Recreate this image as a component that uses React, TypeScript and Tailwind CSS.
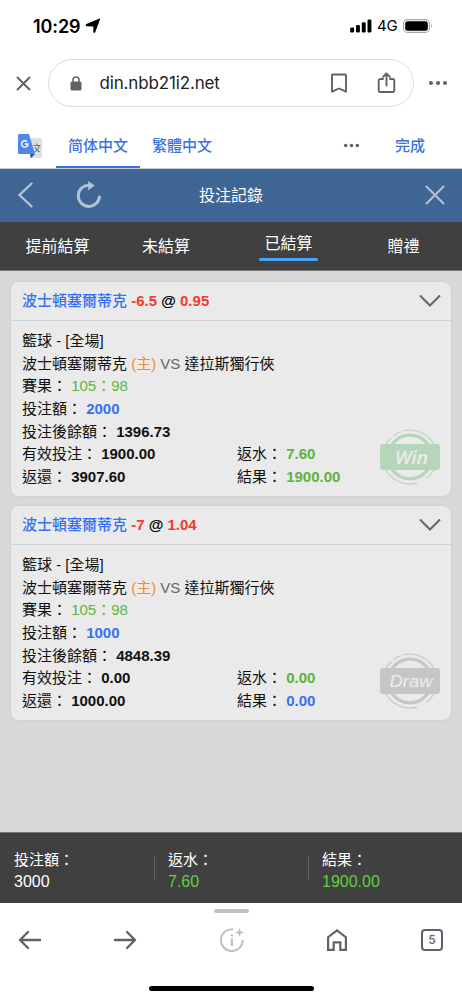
import type { ReactNode } from "react";

interface Bet {
  team: string;
  handicap: string;
  odds: string;
  score: string;
  stake: string;
  balance: string;
  valid: string;
  returned: string;
  rebate: string;
  result: string;
  outcome: "Win" | "Draw";
}

const bets: Bet[] = [
  {
    team: "波士頓塞爾蒂克",
    handicap: "-6.5",
    odds: "0.95",
    score: "105：98",
    stake: "2000",
    balance: "1396.73",
    valid: "1900.00",
    returned: "3907.60",
    rebate: "7.60",
    result: "1900.00",
    outcome: "Win",
  },
  {
    team: "波士頓塞爾蒂克",
    handicap: "-7",
    odds: "1.04",
    score: "105：98",
    stake: "1000",
    balance: "4848.39",
    valid: "0.00",
    returned: "1000.00",
    rebate: "0.00",
    result: "0.00",
    outcome: "Draw",
  },
];

const totals = [
  { label: "投注額：", value: "3000", color: "text-white" },
  { label: "返水：", value: "7.60", color: "text-[#62cf3f]" },
  { label: "結果：", value: "1900.00", color: "text-[#62cf3f]" },
];

function StatusBar() {
  return (
    <div className="flex h-[52px] items-center justify-between pr-[29px] pl-[33px] font-['Inter',sans-serif] text-black">
      <div className="flex items-center gap-[5px]">
        <span className="text-[18px] font-semibold tracking-[-0.1px]">10:29</span>
        <svg width="16" height="16" viewBox="0 0 16 16">
          <path d="M15 1.600 10.200 14.200c-.4.900-1.900.700-1.900-.3V8.500L2 8.300C.5 8.200.3 6.600 1.500 6.100L14 .7c.7-.3 1.200.2 1 .9z" />
        </svg>
      </div>
      <div className="flex items-center">
        <svg width="22" height="14" viewBox="0 0 22 14">
          <rect x="0.200" y="8.500" width="3.900" height="5" rx="1.200" />
          <rect x="6" y="6" width="3.900" height="7.500" rx="1.200" />
          <rect x="11.800" y="3.300" width="3.900" height="10.200" rx="1.200" />
          <rect x="17.500" y="0.500" width="3.900" height="13" rx="1.200" />
        </svg>
        <span className="ml-[5px] w-[26px] text-[15px] tracking-[-0.3px]">4G</span>
        <svg width="30" height="14" viewBox="0 0 30 14">
          <rect x="0.600" y="0.600" width="25.800" height="12.800" rx="4" fill="none" stroke="#a5a5a5" strokeWidth="1.100" />
          <rect x="2.200" y="2.200" width="22.600" height="9.600" rx="2.500" />
          <path d="M28 5v4c1.300-.6 1.300-3.400 0-4z" fill="#a5a5a5" />
        </svg>
      </div>
    </div>
  );
}

function AddressBar() {
  return (
    <div className="flex h-[62px] items-center pl-[16px]">
      <svg width="15" height="15" viewBox="0 0 15 15" fill="none" stroke="#5f6368" strokeWidth="2" strokeLinecap="round">
        <path d="m1.500 1.500 12 12M13.500 1.500l-12 12" />
      </svg>
      <div className="ml-[17px] flex h-12 w-[366px] items-center rounded-full border border-[#dadce0] pl-[21px]">
        <svg width="12" height="15" viewBox="0 0 12 15">
          <path d="M3 6V4a3 3 0 0 1 6 0v2" fill="none" stroke="#5f6368" strokeWidth="1.500" />
          <rect x="0.500" y="5.500" width="11" height="9" rx="1.500" fill="#5f6368" />
        </svg>
        <span className="ml-[17.5px] pt-[2px] font-['Inter',sans-serif] text-[17px] tracking-[-0.15px] text-[#202124]">
          din.nbb21i2.net
        </span>
        <svg className="ml-auto" width="18" height="21" viewBox="0 0 18 21" fill="none" stroke="#5f6368" strokeWidth="1.900">
          <path d="M2 2.500Q2 1.500 3 1.500h12q1 0 1 1v16.200l-7-3.200-7 3.200z" strokeLinejoin="round" />
        </svg>
        <svg className="mr-[17px] ml-[29px]" width="19" height="22" viewBox="0 0 19 22" fill="none" stroke="#5f6368" strokeWidth="1.900" strokeLinecap="round" strokeLinejoin="round">
          <path d="M6 7H3.500Q1.700 7 1.700 8.800v9.400Q1.700 20 3.500 20h12q1.800 0 1.800-1.800V8.800Q17.300 7 15.500 7H13M9.500 13.500V1.700M6 4.900l3.500-3.400L13 4.900" />
        </svg>
      </div>
      <svg className="ml-[14px]" width="20" height="6" viewBox="0 0 20 6" fill="#5f6368">
        <circle cx="3" cy="3" r="2.100" />
        <circle cx="10" cy="3" r="2.100" />
        <circle cx="17" cy="3" r="2.100" />
      </svg>
    </div>
  );
}

function TranslateBar() {
  return (
    <div className="flex h-[54.5px] border-b border-[#c4cad1] pl-[17px] font-['Noto_Sans_CJK_SC',sans-serif] text-[15px] font-medium text-[#3b72e0]">
      <svg className="mt-[19px]" width="26" height="26" viewBox="0 0 26 26">
        <path d="M9 5h14.500q1.500 0 1.500 1.500v17q0 1.500-1.500 1.500H14z" fill="#dfe0e2" />
        <path d="m13 20 5 1-4.300 4.300z" fill="#3549a5" />
        <path d="M2.500 1H12l6 20H2.500Q1 21 1 19.500v-17Q1 1 2.500 1z" fill="#4e86ee" />
        <path d="M16.500 12.500h7M20 10.500v2M17.500 19c3-1.500 4.300-3.500 4.600-6M18 14c1 2 3 4.200 5 5" fill="none" stroke="#667984" strokeWidth="1.200" />
        <path d="M10 8.600A3.200 3.200 0 1 0 11 11H7.800" fill="none" stroke="#fff" strokeWidth="1.400" />
      </svg>
      <div className="ml-[13px] flex w-[84px] items-center justify-center border-b-2 border-[#3b72e0] pt-[10px]">简体中文</div>
      <div className="ml-[12px] flex items-center pt-[8px]">繁體中文</div>
      <svg className="mt-[29px] ml-[131px]" width="17" height="5" viewBox="0 0 17 5" fill="#5f6368">
        <circle cx="2.700" cy="2.500" r="1.800" />
        <circle cx="8.500" cy="2.500" r="1.800" />
        <circle cx="14.300" cy="2.500" r="1.800" />
      </svg>
      <div className="ml-[35px] flex items-center pt-[8px]">完成</div>
    </div>
  );
}

function Header() {
  return (
    <header className="flex h-[53.5px] items-center bg-[#3f6594] pl-[17px] text-white">
      <svg width="17" height="28" viewBox="0 0 17 28" fill="none" stroke="#b2c1d4" strokeWidth="2.400">
        <path d="M15.200 2 2.500 14l12.700 12" />
      </svg>
      <svg className="ml-[42px]" width="26" height="28" viewBox="0 0 26 28">
        <path d="M13.500 4.200A10.600 10.600 0 1 0 23.500 14.700" fill="none" stroke="#b2c1d4" strokeWidth="3" />
        <path d="M12.200 0v9.400l6.500-4.900z" fill="#b2c1d4" />
      </svg>
      <h1 className="ml-[97px] pt-[2px] text-[16px]">投注記錄</h1>
      <svg className="ml-[162px]" width="20" height="20" viewBox="0 0 20 20" fill="none" stroke="#b2c1d4" strokeWidth="2.200">
        <path d="m1 1 18 18M19 1 1 19" />
      </svg>
    </header>
  );
}

function Tabs() {
  return (
    <nav className="grid h-[49px] grid-cols-[115px_102px_143px_87px] items-center justify-items-center border-b border-[#777] bg-[#404040] pt-[2px] text-[16px] leading-6 text-white">
      <span>提前結算</span>
      <span>未結算</span>
      <span className="flex w-[59px] flex-col items-center pb-[2px]">
        已結算
        <span className="mt-[2px] h-[3px] w-full rounded-full bg-[#46a2f3]" />
      </span>
      <span>贈禮</span>
    </nav>
  );
}

function Stamp({ outcome }: { outcome: Bet["outcome"] }) {
  const win = outcome === "Win";
  const color = win ? "#b7d5bb" : "#c6c6c6";

  return (
    <svg className="absolute right-[10px] bottom-[10px]" width="62" height="58" viewBox="0 0 62 58">
      <g fill="none" stroke={color}>
        <circle cx="31" cy="29" r="21.800" strokeWidth="3.300" />
        <path d="M24.500 2.800A27 27 0 0 1 55.500 18M14 8.200A27 27 0 0 1 22 3.500M6 18.500A27 27 0 0 1 12.500 9.500M6 39.500A27 27 0 0 0 38 55.100M47 50.500A27 27 0 0 0 56 39.500" strokeWidth="1.100" />
      </g>
      <rect x="1" y="16" width="60" height="26" rx="3" fill={color} />
      <text
        x={win ? 32.5 : 32}
        y={win ? 35.5 : 35}
        textAnchor="middle"
        textLength={win ? 33 : 43}
        lengthAdjust="spacingAndGlyphs"
        fill="#ebebeb"
        className={
          win
            ? "font-['Noto_Sans',sans-serif] text-[18px] font-medium italic"
            : "font-['Liberation_Sans',sans-serif] text-[17px] italic"
        }
        stroke="#ebebeb"
        strokeWidth={win ? 0.2 : 0.1}
      >
        {outcome}
      </text>
    </svg>
  );
}

function Field({ label, children }: { label: string; children: ReactNode }) {
  return (
    <div>
      {label} {children}
    </div>
  );
}

function BetCard({ bet }: { bet: Bet }) {
  return (
    <article className="relative h-[213.5px] rounded-lg bg-[#eaeaea] text-[15px] text-[#111] shadow-[0_0_3px_rgba(0,0,0,0.08)]">
      <div className="flex h-[38.5px] items-center justify-between border-b border-[#d2d2d2] pr-[10px] pl-[11px]">
        <div className="font-bold text-[#f5392b]">
          <span className="font-medium text-[#3571f4]">{bet.team}</span> {bet.handicap}{" "}
          <span className="text-black">@</span> {bet.odds}
        </div>
        <svg width="22" height="14" viewBox="0 0 22 14" fill="none" stroke="#666" strokeWidth="2.100">
          <path d="m1 1.500 10 10 10-10" />
        </svg>
      </div>
      <div className="px-[11px] pt-[9.6px] leading-[22.65px]">
        <div>籃球 - [全場]</div>
        <div>
          {bet.team} <span className="text-[#f08c35]">(主)</span> <span className="text-[#666]">VS</span> 達拉斯獨行俠
        </div>
        <Field label="賽果：">
          <span className="text-[#5cb840]">{bet.score}</span>
        </Field>
        <Field label="投注額：">
          <b className="text-[#3571f4]">{bet.stake}</b>
        </Field>
        <Field label="投注後餘額：">
          <b>{bet.balance}</b>
        </Field>
        <div className="grid grid-cols-[215px_1fr]">
          <Field label="有效投注：">
            <b>{bet.valid}</b>
          </Field>
          <Field label="返水：">
            <b className="text-[#5cb33c]">{bet.rebate}</b>
          </Field>
          <Field label="返還：">
            <b>{bet.returned}</b>
          </Field>
          <Field label="結果：">
            <b className={bet.outcome === "Win" ? "text-[#5cb33c]" : "text-[#3571f4]"}>{bet.result}</b>
          </Field>
        </div>
      </div>
      <Stamp outcome={bet.outcome} />
    </article>
  );
}

function Totals() {
  return (
    <div className="grid h-[71px] grid-cols-3 border-t border-[#777] bg-[#404040] pt-[16px] text-white">
      {totals.map((item, i) => (
        <div key={item.label} className="relative pl-[14px] text-[15px] leading-[22px]">
          {i > 0 && <span className="absolute top-[7px] left-0 h-6 w-px bg-[#626262]" />}
          <div>{item.label}</div>
          <div className={`text-[16px] ${item.color}`}>{item.value}</div>
        </div>
      ))}
    </div>
  );
}

function BrowserNav() {
  return (
    <footer className="flex h-[97px] flex-col items-center bg-white">
      <div className="mt-[6px] h-1 w-[35px] rounded-full bg-[#bdc1c6]" />
      <div className="mt-[12.5px] flex h-[28px] w-full items-center pl-[18px]">
        <svg width="24" height="20" viewBox="0 0 24 20" fill="none" stroke="#5f6368" strokeWidth="2.400" strokeLinecap="round" strokeLinejoin="round">
          <path d="M22 10H2.500M10 2l-8 8 8 8" />
        </svg>
        <svg className="ml-[71px]" width="24" height="20" viewBox="0 0 24 20" fill="none" stroke="#5f6368" strokeWidth="2.400" strokeLinecap="round" strokeLinejoin="round">
          <path d="M2 10h19.500M14 2l8 8-8 8" />
        </svg>
        <svg className="ml-[81.5px]" width="26" height="26" viewBox="0 0 26 26">
          <path d="M14 2.300A10.900 10.900 0 1 0 23.700 13" fill="none" stroke="#bdc1c6" strokeWidth="2" />
          <path d="M11.800 11.500h2.200V19h-2.200zM11.800 7.300h2.200v2.300h-2.200zM20.500 1l1.300 3.200L25 5.500l-3.200 1.300-1.300 3.200-1.300-3.200L16 5.500l3.200-1.300z" fill="#bdc1c6" />
        </svg>
        <svg className="ml-[81px]" width="22" height="24" viewBox="0 0 22 24" fill="none" stroke="#5f6368" strokeWidth="2.200">
          <path d="M2.100 21.800V9.200L11 2.300l8.900 6.900v12.600h-5.600v-7.500H7.700v7.500z" />
        </svg>
        <div className="ml-[73.5px] flex h-[22px] w-[22px] items-center justify-center rounded-[4px] border-2 border-[#5f6368] font-['Inter',sans-serif] text-[12px] font-medium text-[#5f6368]">
          5
        </div>
      </div>
      <div className="mt-[32.5px] h-[5px] w-[165px] rounded-full bg-black" />
    </footer>
  );
}

export default function App() {
  return (
    <div
      lang="zh-Hant"
      className="flex h-[1000px] w-[462px] flex-col overflow-hidden bg-white font-['Liberation_Sans','Noto_Sans_CJK_TC',sans-serif]"
    >
      <StatusBar />
      <AddressBar />
      <TranslateBar />
      <Header />
      <Tabs />
      <main className="flex flex-1 flex-col gap-[10.5px] bg-[#d8d8d8] px-[11px] pt-[11px]">
        {bets.map((bet) => (
          <BetCard key={bet.balance} bet={bet} />
        ))}
      </main>
      <Totals />
      <BrowserNav />
    </div>
  );
}
